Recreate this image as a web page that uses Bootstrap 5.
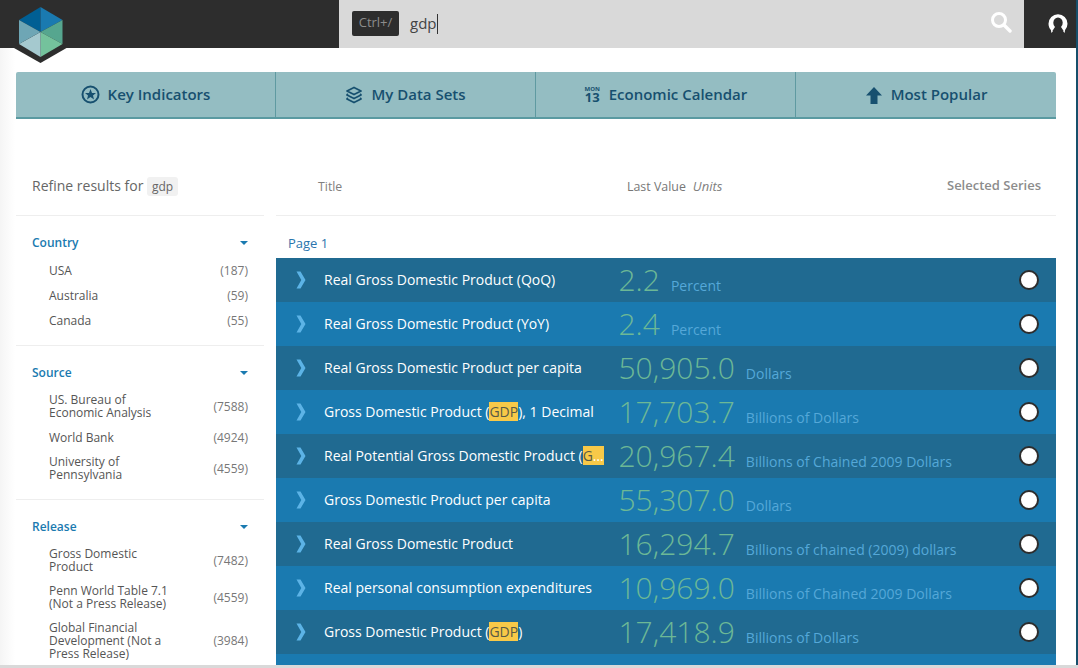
<!DOCTYPE html>
<html lang="en">
<head>
<meta charset="utf-8">
<title>Search results</title>
<link rel="stylesheet" href="https://cdn.jsdelivr.net/npm/bootstrap@5.3.0/dist/css/bootstrap.min.css">
<style>
html,body{height:668px;overflow:hidden}
body{font-family:"Open Sans",sans-serif;background:#fff;color:#555;font-size:12px}
.shell{height:665px;overflow:hidden;position:relative;border-right:2px solid #174f6b;background:linear-gradient(90deg,#f5f5f5 0,#fff 15px)}
.bottom-strip{height:3px;background:#d9d9d9}
.topbar{height:48px;background:#2d2d2d;margin-right:-2px;position:relative;z-index:2}
.brand-area{width:339px}
.brand-logo{position:absolute;left:14px;top:6px;width:53px;height:58px}
.search-area{background:#d9d9d9;padding-left:13px;padding-right:13px}
.kbd-hint{background:#2d2d2d;color:#8c8c8c;font-size:13px;border-radius:2px;height:25px;width:47px;line-height:23px;text-align:center;margin-top:-1px}
.search-text{font-size:15px;color:#444;margin-left:11px;border-right:1px solid #333;height:20px;line-height:18px}
.search-ico{margin-right:-1px;margin-top:-3px}
.user-area{width:54px}
.user-ico{margin-left:14px;margin-top:-1px}
.tabstrip{margin:24px 20px 0 16px;height:47px;border-bottom:2px solid #5a9aa1;background:#94bdc2;border-radius:2px 2px 0 0;width:1040px}
.tab-cell{width:260px;height:45px;gap:8px;color:#17506f;font-size:15px;font-weight:600;text-decoration:none;border-right:1px solid #5f9aa1}
.tab-cell:last-child{border-right:0}
.date-ico{display:inline-flex;flex-direction:column;align-items:center;line-height:1;color:#17506f;font-weight:700;width:17px}
.date-ico span:first-child{font-size:6px;line-height:6px}
.date-ico span:last-child{font-size:13px;line-height:11px}
.content-area{margin:0 20px 0 16px;gap:12px;width:1040px}
.side-col{width:248px;flex:none}
.main-col{width:780px;flex:none}
.head-block{height:97px;border-bottom:1px solid #eee;padding-top:56px}
.refine{font-size:14px;color:#666;padding-left:16px;line-height:22px}
.term-chip{background:#f1f1f1;color:#666;font-size:12px;border-radius:3px;padding:2px 5px;display:inline-block;line-height:15px}
.facet{padding:19px 16px 12px 16px;border-bottom:1px solid #eee}
.facet:last-child{border-bottom:0}
.facet-head{color:#1a7ab0;font-size:12px;font-weight:600;height:16px;line-height:16px;margin-bottom:7px}
.facet-caret{width:0;height:0;border-left:4px solid transparent;border-right:4px solid transparent;border-top:4px solid #1a7ab0}
.facet-item{padding-left:17px;color:#555;font-size:12px;line-height:13px;padding-top:6px;padding-bottom:6px}
.facet-item.multi-line{padding-top:5px;padding-bottom:6px}
.facet-name{width:125px}
.facet-count{color:#777;margin-left:auto}
.col-labels{color:#808080;font-size:12px;line-height:18px}
.lab-title{margin-left:42px;width:309px;margin-top:3px;font-size:12.3px}
.lab-value{color:#777;margin-top:3px;font-size:12.4px}
.lab-units{font-style:italic;margin-left:7px;margin-top:2px;font-size:13px}
.lab-sel{margin-left:auto;margin-right:15px;font-weight:600;color:#8c8c8c;font-size:13px;margin-top:1px}
.page-label{color:#2a75ad;font-size:13px;height:42px;padding:18px 0 0 12px;line-height:18px}
.series-row{height:44px;background:#1a7ab0;padding-right:17px}
.series-row:nth-child(odd){background:#206a91}
.chev{width:48px;padding-left:20px;flex:none;line-height:0}
.series-title{width:280px;color:#fff;font-size:14px;white-space:nowrap;overflow:hidden;text-overflow:ellipsis;flex:none;margin-top:-2px}
.series-title mark{background:#f8c948;color:#5a5a45;padding:0;display:inline}
.series-val{font-size:30px;font-weight:300;color:#6cb896;margin-left:14.5px;line-height:44px;white-space:nowrap}
.series-unit{font-size:14px;color:#55a8d8;margin-left:11px;margin-top:11px;white-space:nowrap}
.pick{width:20px;height:20px;border-radius:50%;background:#fff;border:2px solid #2d2d2d;margin-left:auto;flex:none}
</style>
</head>
<body>
<div class="shell">
  <div class="topbar d-flex">
    <div class="brand-area"></div>
    <div class="search-area flex-grow-1 d-flex align-items-center">
      <div class="kbd-hint">Ctrl+/</div>
      <div class="search-text">gdp</div>
      <svg class="search-ico ms-auto" width="21" height="21" viewBox="0 0 21 21"><circle cx="8" cy="8" r="6.5" fill="none" stroke="#fff" stroke-width="3"/><path d="M13 13l6 6" stroke="#fff" stroke-width="3.4" stroke-linecap="round"/></svg>
    </div>
    <div class="user-area d-flex align-items-center justify-content-center">
      <svg class="user-ico" width="20" height="20" viewBox="0 0 20 20"><path d="M10 .200a9.500 9.500 0 0 0-9.500 9.500c0 2.400.9 4.600 2.400 6.300l.5 3 2.800-3.200 1-1.500 2.800.2 2.800-.2 1 1.500 2.800 3.200.5-3a9.500 9.500 0 0 0 2.400-6.300A9.500 9.500 0 0 0 10 .200z" fill="#fff"/><ellipse cx="10" cy="8.800" rx="4.700" ry="5.300" fill="#2d2d2d"/><path d="M7 13h6l2.500 3.800-2 3.200h-7l-2-3.200z" fill="#2d2d2d"/></svg>
    </div>
    <svg class="brand-logo" viewBox="14 6 53 58">
      <polygon points="14,48 40.500,63 66.500,48 62.500,42 19,42" fill="#2d2d2d"/>
      <polygon points="40.500,7 19,20 40.500,32" fill="#005f94"/>
      <polygon points="40.500,7 62.500,20 40.500,32" fill="#1a7ab0"/>
      <polygon points="62.500,20 62.500,44 40.500,32" fill="#56a68f"/>
      <polygon points="62.500,44 40.500,57 40.500,32" fill="#74c29c"/>
      <polygon points="40.500,57 19,44 40.500,32" fill="#a5c9cf"/>
      <polygon points="19,44 19,20 40.500,32" fill="#6ea6b5"/>
    </svg>
  </div>

  <nav class="tabstrip d-flex">
    <a class="tab-cell d-flex align-items-center justify-content-center" href="#">
      <svg width="19" height="19" viewBox="0 0 19 19"><circle cx="9.500" cy="9.500" r="8" fill="none" stroke="#17506f" stroke-width="2"/><polygon points="9.500,4 11,8 15,8 12,10.500 13,14.500 9.500,12 6,14.500 7,10.500 4,8 8,8" fill="#17506f"/></svg>
      Key Indicators
    </a>
    <a class="tab-cell d-flex align-items-center justify-content-center" href="#">
      <svg width="18" height="18" viewBox="0 0 18 18" fill="none" stroke="#17506f" stroke-width="1.800" stroke-linejoin="round"><path d="M9 1.500 16 5 9 8.500 2 5z"/><path d="M3 8 2 9l7 3.500L16 9l-1-1"/><path d="M3 12l-1 1 7 3.500 7-3.500-1-1"/></svg>
      My Data Sets
    </a>
    <a class="tab-cell d-flex align-items-center justify-content-center" href="#">
      <span class="date-ico"><span>MON</span><span>13</span></span>
      Economic Calendar
    </a>
    <a class="tab-cell d-flex align-items-center justify-content-center" href="#">
      <svg width="18" height="18" viewBox="0 0 18 18"><polygon points="9,1 17,9.500 12.500,9.500 12.500,18 5.500,18 5.500,9.500 1,9.500" fill="#17506f"/></svg>
      Most Popular
    </a>
  </nav>

  <div class="content-area d-flex">
    <aside class="side-col">
      <div class="head-block"><div class="refine">Refine results for <span class="term-chip">gdp</span></div></div>
      <section class="facet">
        <div class="facet-head d-flex align-items-center justify-content-between">Country<span class="facet-caret"></span></div>
        <div class="facet-item d-flex align-items-center"><span class="facet-name">USA</span><span class="facet-count">(187)</span></div>
        <div class="facet-item d-flex align-items-center"><span class="facet-name">Australia</span><span class="facet-count">(59)</span></div>
        <div class="facet-item d-flex align-items-center"><span class="facet-name">Canada</span><span class="facet-count">(55)</span></div>
      </section>
      <section class="facet">
        <div class="facet-head d-flex align-items-center justify-content-between">Source<span class="facet-caret"></span></div>
        <div class="facet-item multi-line d-flex align-items-center"><span class="facet-name">US. Bureau of Economic Analysis</span><span class="facet-count">(7588)</span></div>
        <div class="facet-item d-flex align-items-center"><span class="facet-name">World Bank</span><span class="facet-count">(4924)</span></div>
        <div class="facet-item multi-line d-flex align-items-center"><span class="facet-name">University of Pennsylvania</span><span class="facet-count">(4559)</span></div>
      </section>
      <section class="facet">
        <div class="facet-head d-flex align-items-center justify-content-between">Release<span class="facet-caret"></span></div>
        <div class="facet-item multi-line d-flex align-items-center"><span class="facet-name">Gross Domestic Product</span><span class="facet-count">(7482)</span></div>
        <div class="facet-item multi-line d-flex align-items-center"><span class="facet-name">Penn World Table 7.1 (Not a Press Release)</span><span class="facet-count">(4559)</span></div>
        <div class="facet-item multi-line d-flex align-items-center"><span class="facet-name">Global Financial Development (Not a Press Release)</span><span class="facet-count">(3984)</span></div>
      </section>
    </aside>
    <main class="main-col">
      <div class="head-block col-labels d-flex align-items-start">
        <span class="lab-title">Title</span>
        <span class="lab-value">Last Value</span><span class="lab-units">Units</span>
        <span class="lab-sel">Selected Series</span>
      </div>
      <div class="page-label">Page 1</div>
      <div id="rows">
        <div class="series-row d-flex align-items-center"><span class="chev"><svg width="10" height="18" viewBox="0 0 10 18"><path d="M.5.500h4L9.500 9l-5 8.500h-4L5.300 9z" fill="#5cb3e6"/></svg></span><span class="series-title">Real Gross Domestic Product (QoQ)</span><span class="series-val">2.2</span><span class="series-unit">Percent</span><span class="pick"></span></div>
        <div class="series-row d-flex align-items-center"><span class="chev"><svg width="10" height="18" viewBox="0 0 10 18"><path d="M.5.500h4L9.500 9l-5 8.500h-4L5.300 9z" fill="#5cb3e6"/></svg></span><span class="series-title">Real Gross Domestic Product (YoY)</span><span class="series-val">2.4</span><span class="series-unit">Percent</span><span class="pick"></span></div>
        <div class="series-row d-flex align-items-center"><span class="chev"><svg width="10" height="18" viewBox="0 0 10 18"><path d="M.5.500h4L9.500 9l-5 8.500h-4L5.300 9z" fill="#5cb3e6"/></svg></span><span class="series-title">Real Gross Domestic Product per capita</span><span class="series-val">50,905.0</span><span class="series-unit">Dollars</span><span class="pick"></span></div>
        <div class="series-row d-flex align-items-center"><span class="chev"><svg width="10" height="18" viewBox="0 0 10 18"><path d="M.5.500h4L9.500 9l-5 8.500h-4L5.300 9z" fill="#5cb3e6"/></svg></span><span class="series-title">Gross Domestic Product (<mark>GDP</mark>), 1 Decimal</span><span class="series-val">17,703.7</span><span class="series-unit">Billions of Dollars</span><span class="pick"></span></div>
        <div class="series-row d-flex align-items-center"><span class="chev"><svg width="10" height="18" viewBox="0 0 10 18"><path d="M.5.500h4L9.500 9l-5 8.500h-4L5.300 9z" fill="#5cb3e6"/></svg></span><span class="series-title">Real Potential Gross Domestic Product (<mark>GDP</mark>)</span><span class="series-val">20,967.4</span><span class="series-unit">Billions of Chained 2009 Dollars</span><span class="pick"></span></div>
        <div class="series-row d-flex align-items-center"><span class="chev"><svg width="10" height="18" viewBox="0 0 10 18"><path d="M.5.500h4L9.500 9l-5 8.500h-4L5.300 9z" fill="#5cb3e6"/></svg></span><span class="series-title">Gross Domestic Product per capita</span><span class="series-val">55,307.0</span><span class="series-unit">Dollars</span><span class="pick"></span></div>
        <div class="series-row d-flex align-items-center"><span class="chev"><svg width="10" height="18" viewBox="0 0 10 18"><path d="M.5.500h4L9.500 9l-5 8.500h-4L5.300 9z" fill="#5cb3e6"/></svg></span><span class="series-title">Real Gross Domestic Product</span><span class="series-val">16,294.7</span><span class="series-unit">Billions of chained (2009) dollars</span><span class="pick"></span></div>
        <div class="series-row d-flex align-items-center"><span class="chev"><svg width="10" height="18" viewBox="0 0 10 18"><path d="M.5.500h4L9.500 9l-5 8.500h-4L5.300 9z" fill="#5cb3e6"/></svg></span><span class="series-title">Real personal consumption expenditures</span><span class="series-val">10,969.0</span><span class="series-unit">Billions of Chained 2009 Dollars</span><span class="pick"></span></div>
        <div class="series-row d-flex align-items-center"><span class="chev"><svg width="10" height="18" viewBox="0 0 10 18"><path d="M.5.500h4L9.500 9l-5 8.500h-4L5.300 9z" fill="#5cb3e6"/></svg></span><span class="series-title">Gross Domestic Product (<mark>GDP</mark>)</span><span class="series-val">17,418.9</span><span class="series-unit">Billions of Dollars</span><span class="pick"></span></div>
        <div class="series-row d-flex align-items-center"></div>
      </div>
    </main>
  </div>
</div>
<div class="bottom-strip"></div>
<script src="https://cdn.jsdelivr.net/npm/bootstrap@5.3.0/dist/js/bootstrap.bundle.min.js"></script>
</body>
</html>
